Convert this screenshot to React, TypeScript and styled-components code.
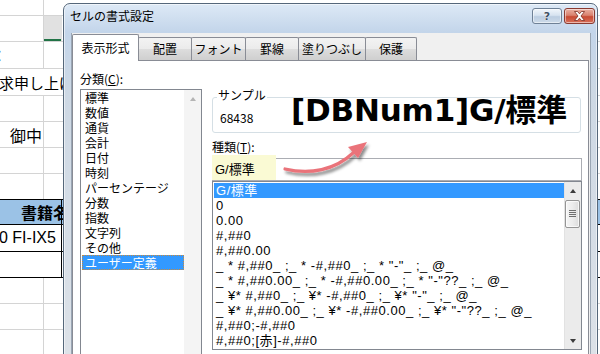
import React from "react";
import styled, { createGlobalStyle } from "styled-components";

const GlobalStyle = createGlobalStyle`
  html, body {
    margin: 0;
    padding: 0;
  }
  body {
    width: 600px;
    height: 354px;
    overflow: hidden;
    background: #ffffff;
    font-family: "Noto Sans CJK JP", "Noto Sans", sans-serif;
  }
`;

const Page = styled.div`
  position: relative;
  width: 600px;
  height: 354px;
  overflow: hidden;
  background: #ffffff;
`;

/* ---------- spreadsheet behind the dialog ---------- */

const Sheet = styled.div`
  display: flex;
  flex-direction: column;
`;

const SheetRow = styled.div<{ $h: number; $line?: string; $bg?: string }>`
  display: grid;
  grid-template-columns: 44px 18px 1fr;
  height: ${(p) => p.$h}px;
  box-sizing: border-box;
  border-bottom: 1px solid ${(p) => p.$line ?? "#d4d4d4"};
  background: ${(p) => p.$bg ?? "transparent"};
`;

const Cell = styled.div<{ $rb?: string; $bg?: string; $green?: boolean; $align?: string }>`
  box-sizing: border-box;
  display: flex;
  align-items: center;
  justify-content: ${(p) => p.$align ?? "flex-start"};
  border-right: 1px solid ${(p) => p.$rb ?? "transparent"};
  background: ${(p) => p.$bg ?? "transparent"};
  box-shadow: ${(p) => (p.$green ? "inset 0 -2px 0 #217346" : "none")};
  white-space: nowrap;
  color: #000;
`;

const CellText = styled.span<{ $size?: number; $shift?: number; $bold?: boolean; $latin?: boolean }>`
  font-size: ${(p) => p.$size ?? 16}px;
  font-weight: ${(p) => (p.$bold ? 700 : 400)};
  margin-left: ${(p) => p.$shift ?? 0}px;
  font-family: ${(p) =>
    p.$latin ? `"Liberation Sans", "Noto Sans CJK JP", sans-serif` : `"Noto Sans CJK JP", sans-serif`};
  line-height: 1;
`;

/* ---------- dialog window ---------- */

const Dialog = styled.div`
  position: absolute;
  left: 63px;
  top: 3px;
  width: 535px;
  height: 364px;
  box-sizing: border-box;
  border: 1px solid #55677a;
  border-radius: 7px 7px 0 0;
  background: linear-gradient(to bottom, #dde9f6 0px, #c3d5ea 28px, #cdd8e4 90px, #dde2e8 100%);
  box-shadow: inset 0 0 0 1px rgba(255, 255, 255, 0.55);
  display: flex;
  flex-direction: column;
  font-size: 12px;
  color: #000;
`;

const TitleBar = styled.div`
  height: 29px;
  flex: none;
  display: flex;
  align-items: flex-start;
  padding: 0 2px 0 6px;
`;

const Title = styled.div`
  flex: 1;
  margin-top: 4px;
  font-size: 12px;
  line-height: 16px;
`;

const CaptionButtons = styled.div`
  display: flex;
  gap: 2px;
  margin-top: 4px;
`;

const CaptionButton = styled.div<{ $close?: boolean }>`
  width: ${(p) => (p.$close ? 31 : 30)}px;
  height: 16px;
  box-sizing: border-box;
  border: 1px solid ${(p) => (p.$close ? "#8a3a30" : "#6f8196")};
  border-radius: 3px;
  background: ${(p) =>
    p.$close
      ? "linear-gradient(to bottom, #eab0a3 0%, #d9826f 45%, #c84a33 55%, #d8705a 100%)"
      : "linear-gradient(to bottom, #f1f6fb 0%, #d7e3f0 45%, #bccde1 55%, #cddbe9 100%)"};
  box-shadow: inset 0 0 0 1px rgba(255, 255, 255, 0.5);
  display: flex;
  align-items: center;
  justify-content: center;
`;

const HelpGlyph = styled.span`
  font-family: "DejaVu Sans", sans-serif;
  font-weight: 700;
  font-size: 11px;
  line-height: 1;
  color: #3e4f63;
  text-shadow: 0 0 1px #fff, 0 0 1px #fff;
`;

const Client = styled.div`
  flex: 1;
  margin: 0 6px 0 7px;
  background: #f0f0f0;
  border-left: 1px solid #9aa6b4;
  border-right: 1px solid #9aa6b4;
  display: flex;
  flex-direction: column;
`;

const TabStrip = styled.div`
  height: 27px;
  flex: none;
  display: flex;
  align-items: flex-end;
`;

const Tab = styled.div<{ $active?: boolean; $w: number }>`
  position: relative;
  z-index: ${(p) => (p.$active ? 2 : 1)};
  width: ${(p) => p.$w}px;
  height: ${(p) => (p.$active ? 27 : 23)}px;
  margin-bottom: ${(p) => (p.$active ? -1 : 0)}px;
  margin-left: -1px;
  box-sizing: border-box;
  border: 1px solid #898c95;
  border-bottom: none;
  border-radius: 2px 2px 0 0;
  background: ${(p) =>
    p.$active ? "#ffffff" : "linear-gradient(to bottom, #f3f3f3 0%, #ebebeb 50%, #dddddd 51%, #cfcfcf 100%)"};
  display: flex;
  justify-content: center;
  padding-top: ${(p) => (p.$active ? 5 : 3)}px;
  font-size: 12px;
  line-height: 16px;

  &:first-child {
    margin-left: 0;
  }
`;

const TabPanel = styled.div`
  width: 517px;
  flex: 1;
  box-sizing: border-box;
  border: 1px solid #898c95;
  background: #ffffff;
  display: flex;
  gap: 10px;
  padding: 10px 0 0 7px;
`;

const Column = styled.div<{ $w: number }>`
  width: ${(p) => p.$w}px;
  flex: none;
  display: flex;
  flex-direction: column;
`;

const FieldLabel = styled.div<{ $gap?: number }>`
  height: 16px;
  font-size: 12px;
  line-height: 16px;
  margin-top: ${(p) => p.$gap ?? 0}px;
  margin-bottom: 2px;
`;

const ListBox = styled.div<{ $h: number }>`
  height: ${(p) => p.$h}px;
  box-sizing: border-box;
  border: 1px solid #828790;
  background: #ffffff;
  display: flex;
  flex: none;
`;

const ListItems = styled.div<{ $top?: number }>`
  flex: 1;
  min-width: 0;
  padding-top: ${(p) => p.$top ?? 1}px;
`;

const CategoryItem = styled.div<{ $selected?: boolean }>`
  height: 15px;
  box-sizing: border-box;
  margin-left: 1px;
  padding-left: 2px;
  font-size: 12px;
  line-height: 13px;
  border: 1px dotted ${(p) => (p.$selected ? "#c98a3c" : "transparent")};
  background: ${(p) => (p.$selected ? "#3399ff" : "transparent")};
  color: ${(p) => (p.$selected ? "#ffffff" : "#000000")};
  white-space: nowrap;
`;

const TypeItem = styled.div<{ $selected?: boolean }>`
  height: 15px;
  margin-left: 1px;
  padding-left: 2px;
  font-family: "Liberation Sans", "Noto Sans CJK JP", sans-serif;
  font-size: 13px;
  letter-spacing: 0.55px;
  line-height: 15px;
  white-space: pre;
  background: ${(p) => (p.$selected ? "#3399ff" : "transparent")};
  color: ${(p) => (p.$selected ? "#ffffff" : "#000000")};
`;

const ScrollBar = styled.div<{ $disabled?: boolean }>`
  width: 17px;
  flex: none;
  display: flex;
  flex-direction: column;
  background: ${(p) => (p.$disabled ? "#f4f4f4" : "#ebebeb")};
  border-left: 1px solid ${(p) => (p.$disabled ? "#f4f4f4" : "#e2e2e2")};
  box-sizing: border-box;
`;

const ScrollButton = styled.div`
  height: 17px;
  flex: none;
  display: flex;
  align-items: center;
  justify-content: center;
`;

const Triangle = styled.span<{ $down?: boolean; $disabled?: boolean }>`
  width: 0;
  height: 0;
  border-left: 3.5px solid transparent;
  border-right: 3.5px solid transparent;
  ${(p) => (p.$down ? "border-top" : "border-bottom")}: 4px solid ${(p) => (p.$disabled ? "#b4b4b4" : "#3b3b3b")};
`;

const Thumb = styled.div`
  height: 28px;
  margin: 1px 1px 0 0;
  box-sizing: border-box;
  border: 1px solid #959595;
  border-radius: 2px;
  background: linear-gradient(to right, #f5f5f5 0%, #ececec 50%, #dcdcdc 100%);
  box-shadow: inset 0 0 0 1px rgba(255, 255, 255, 0.7);
  display: flex;
  align-items: center;
  justify-content: center;
`;

const Grip = styled.span`
  width: 7px;
  height: 8px;
  background: repeating-linear-gradient(to bottom, #6e6e6e 0px, #6e6e6e 1px, transparent 1px, transparent 2px);
`;

const Spacer = styled.div`
  flex: 1;
`;

const SampleBox = styled.div`
  position: relative;
  width: 369px;
  height: 36px;
  margin-top: 26px;
  box-sizing: border-box;
  border: 1px solid #d5dfe5;
  border-radius: 3px;
  padding: 12px 0 0 7px;
  font-size: 12px;
  line-height: 16px;
`;

const Legend = styled.span`
  position: absolute;
  left: 4px;
  top: -11px;
  padding: 0 1px;
  background: #ffffff;
  font-size: 12px;
  line-height: 16px;
`;

const BigText = styled.div`
  position: absolute;
  left: 78px;
  top: -6px;
  font-family: "DejaVu Sans", "Noto Sans CJK JP", sans-serif;
  font-weight: 700;
  font-size: 31px;
  line-height: 36px;
  letter-spacing: -0.2px;
  white-space: nowrap;
  color: #000;
`;

const InputBox = styled.div`
  position: relative;
  height: 23px;
  margin-top: 1px;
  box-sizing: border-box;
  border: 1px solid #abadb3;
  background: #ffffff;
  padding-left: 2px;
  display: flex;
  align-items: center;
  font-size: 12px;
`;

const Highlight = styled.span`
  position: absolute;
  left: -1px;
  top: -4px;
  width: 64px;
  height: 25px;
  background: #fafad4;
`;

const InputText = styled.span`
  position: relative;
  line-height: 16px;
  font-family: "Liberation Sans", "Noto Sans CJK JP", sans-serif;
  font-size: 13px;
`;

const ArrowMark = styled.svg`
  position: absolute;
  left: 280px;
  top: 135px;
`;

const categories = [
  "標準",
  "数値",
  "通貨",
  "会計",
  "日付",
  "時刻",
  "パーセンテージ",
  "分数",
  "指数",
  "文字列",
  "その他",
  "ユーザー定義",
];

const formats = [
  "G/標準",
  "0",
  "0.00",
  "#,##0",
  "#,##0.00",
  '_ * #,##0_ ;_ * -#,##0_ ;_ * "-"_ ;_ @_',
  '_ * #,##0.00_ ;_ * -#,##0.00_ ;_ * "-"??_ ;_ @_',
  '_ ¥* #,##0_ ;_ ¥* -#,##0_ ;_ ¥* "-"_ ;_ @_',
  '_ ¥* #,##0.00_ ;_ ¥* -#,##0.00_ ;_ ¥* "-"??_ ;_ @_',
  "#,##0;-#,##0",
  "#,##0;[赤]-#,##0",
];

const tabs = [
  { label: "表示形式", w: 67, active: true },
  { label: "配置", w: 54 },
  { label: "フォント", w: 55 },
  { label: "罫線", w: 54 },
  { label: "塗りつぶし", w: 68 },
  { label: "保護", w: 52 },
];

const GRID = "#d4d4d4";

export default function App() {
  return (
    <>
      <GlobalStyle />
      <Page>
        <Sheet>
          <SheetRow $h={16}>
            <Cell $rb={GRID} />
          </SheetRow>
          <SheetRow $h={26}>
            <Cell $rb={GRID} />
            <Cell $bg="#e1e1e1" $green />
          </SheetRow>
          <SheetRow $h={27}>
            <Cell $rb={GRID}>
              <CellText $shift={-9}>：</CellText>
            </Cell>
          </SheetRow>
          <SheetRow $h={27}>
            <Cell>
              <CellText $size={15} $shift={-16}>
                請求申し上げます
              </CellText>
            </Cell>
          </SheetRow>
          <SheetRow $h={26}>
            <Cell $rb={GRID} />
          </SheetRow>
          <SheetRow $h={26}>
            <Cell $rb={GRID} $align="flex-end">
              <CellText style={{ marginRight: 1 }}>御中</CellText>
            </Cell>
          </SheetRow>
          <SheetRow $h={26}>
            <Cell $rb={GRID} />
          </SheetRow>
          <SheetRow $h={26} $line="#000">
            <Cell $rb={GRID} />
          </SheetRow>
          <SheetRow $h={25} $line="#000" $bg="#9bc2e6">
            <Cell>
              <CellText $bold $shift={21}>
                書籍名
              </CellText>
            </Cell>
            <Cell $rb="#000" />
          </SheetRow>
          <SheetRow $h={27} $line="#000">
            <Cell>
              <CellText $latin $shift={-1}>
                0 FI-IX5
              </CellText>
            </Cell>
            <Cell $rb="#000" />
          </SheetRow>
          <SheetRow $h={26} $line="#000">
            <Cell />
            <Cell $rb="#000" />
          </SheetRow>
          <SheetRow $h={26}>
            <Cell $rb={GRID} />
          </SheetRow>
          <SheetRow $h={26}>
            <Cell $rb={GRID} />
          </SheetRow>
          <SheetRow $h={26}>
            <Cell $rb={GRID} />
          </SheetRow>
        </Sheet>

        <Dialog>
          <TitleBar>
            <Title>セルの書式設定</Title>
            <CaptionButtons>
              <CaptionButton>
                <HelpGlyph>?</HelpGlyph>
              </CaptionButton>
              <CaptionButton $close>
                <svg width="13" height="10" viewBox="0 0 13 10">
                  <path
                    d="M1.5 0.5h3l2 2.3 2-2.3h3l-3.5 4.5 3.5 4.5h-3l-2-2.3-2 2.3h-3l3.5-4.5z"
                    fill="#ffffff"
                    stroke="#7a2c22"
                    strokeWidth="0.8"
                    strokeLinejoin="round"
                  />
                </svg>
              </CaptionButton>
            </CaptionButtons>
          </TitleBar>
          <Client>
            <TabStrip>
              {tabs.map((t) => (
                <Tab key={t.label} $w={t.w} $active={t.active}>
                  {t.label}
                </Tab>
              ))}
            </TabStrip>
            <TabPanel>
              <Column $w={122}>
                <FieldLabel>
                  分類(<u>C</u>):
                </FieldLabel>
                <ListBox $h={290}>
                  <ListItems $top={0}>
                    {categories.map((c) => (
                      <CategoryItem key={c} $selected={c === "ユーザー定義"}>
                        {c}
                      </CategoryItem>
                    ))}
                  </ListItems>
                  <ScrollBar $disabled>
                    <ScrollButton>
                      <Triangle $disabled />
                    </ScrollButton>
                  </ScrollBar>
                </ListBox>
              </Column>
              <Column $w={370}>
                <SampleBox>
                  <Legend>サンプル</Legend>
                  68438
                  <BigText>[DBNum1]G/標準</BigText>
                </SampleBox>
                <FieldLabel $gap={6}>
                  種類(<u>T</u>):
                </FieldLabel>
                <InputBox>
                  <Highlight />
                  <InputText>G/標準</InputText>
                </InputBox>
                <ListBox $h={169}>
                  <ListItems>
                    {formats.map((f, i) => (
                      <TypeItem key={f} $selected={i === 0}>
                        {f}
                      </TypeItem>
                    ))}
                  </ListItems>
                  <ScrollBar>
                    <ScrollButton>
                      <Triangle />
                    </ScrollButton>
                    <Thumb>
                      <Grip />
                    </Thumb>
                    <Spacer />
                    <ScrollButton>
                      <Triangle $down />
                    </ScrollButton>
                  </ScrollBar>
                </ListBox>
              </Column>
            </TabPanel>
          </Client>
        </Dialog>

        <ArrowMark width={95} height={45} viewBox="0 0 95 45">
          <defs>
            <filter id="arrowShadow" x="-20%" y="-30%" width="150%" height="180%">
              <feDropShadow dx="2" dy="3" stdDeviation="1.6" floodColor="#000" floodOpacity="0.45" />
            </filter>
          </defs>
          <g filter="url(#arrowShadow)">
            <path d="M5 34 C 30 40, 55 35, 73 18" fill="none" stroke="#ea737a" strokeWidth="3.2" strokeLinecap="round" />
            <polygon points="87,7 68,12 78,23" fill="#ea737a" />
          </g>
        </ArrowMark>
      </Page>
    </>
  );
}
